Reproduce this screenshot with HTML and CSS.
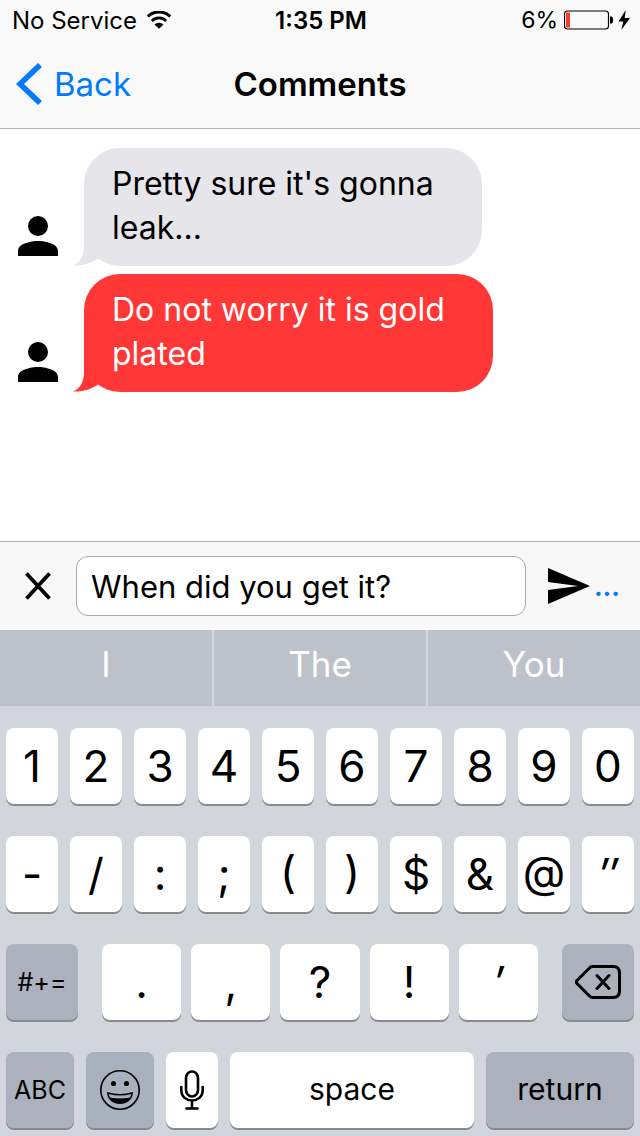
FILE: index.html
```html
<!DOCTYPE html>
<html lang="en">
<head>
<meta charset="utf-8">
<meta name="viewport" content="width=device-width">
<title>Comments</title>
<link rel="stylesheet" href="styles.css">
</head>
<body>
<div class="app">
  <div class="status">
    <div class="status-side">
      <span>No Service</span>
      <svg class="wifi" viewBox="0 0 24 18" aria-hidden="true">
        <path d="M0.800 5.500a16 16 0 0 1 22.400 0" fill="none" stroke="#000" stroke-width="3"/>
        <path d="M4.800 9.900a10.300 10.300 0 0 1 14.400 0" fill="none" stroke="#000" stroke-width="2.800"/>
        <path d="M12 17.800L7.500 13.500a6.500 6.500 0 0 1 9 0z"/>
      </svg>
    </div>
    <span class="clock">1:35 PM</span>
    <div class="status-side status-right">
      <span class="percent">6%</span>
      <svg class="battery" viewBox="0 0 50 20" aria-hidden="true">
        <rect x="0.500" y="1" width="44" height="18" rx="3" fill="none" stroke="#000" stroke-width="1.200"/>
        <rect x="2" y="2.500" width="4" height="15" fill="#ff3b30"/>
        <path d="M46 6.500h1.500q1.500 0 1.500 3.500t-1.500 3.500H46z"/>
      </svg>
      <svg class="bolt" viewBox="0 0 12 20" aria-hidden="true"><path d="M7.800 0L0.500 11.500h4.800L3.300 20 12 8H6.700z"/></svg>
    </div>
  </div>
  <header class="nav">
    <button class="back" type="button">
      <svg class="chevron" viewBox="0 0 26 42" aria-hidden="true"><path d="M24 2L4 21l20 19" fill="none" stroke="currentColor" stroke-width="5.600"/></svg>
      <span>Back</span>
    </button>
    <h1 class="title">Comments</h1>
  </header>
  <main class="thread">
    <article class="message">
      <svg class="avatar" viewBox="4 4 16 16" role="img" aria-label="User"><path d="M12 12a4 4 0 1 0 0-8 4 4 0 0 0 0 8zm0 2c-2.670 0-8 1-8 4v2h16v-2c0-3-5.330-4-8-4z"/></svg>
      <p class="bubble">Pretty sure it's gonna<br>leak...
        <svg class="tail" viewBox="0 0 40 40" aria-hidden="true"><path d="M12 2V20C12 30 8 37 1 39.500C11 40 19 37 25.500 33L40 10z"/></svg>
      </p>
    </article>
    <article class="message">
      <svg class="avatar" viewBox="4 4 16 16" role="img" aria-label="User"><path d="M12 12a4 4 0 1 0 0-8 4 4 0 0 0 0 8zm0 2c-2.670 0-8 1-8 4v2h16v-2c0-3-5.330-4-8-4z"/></svg>
      <p class="bubble bubble-red">Do not worry it is gold<br>plated
        <svg class="tail" viewBox="0 0 40 40" aria-hidden="true"><path d="M12 2V20C12 30 8 37 1 39.500C11 40 19 37 25.500 33L40 10z"/></svg>
      </p>
    </article>
  </main>
  <form class="composer">
    <button class="close" type="button" aria-label="Close">
      <svg class="cross" viewBox="0 0 26 28" aria-hidden="true"><path d="M1.500 1.500l23 25M24.500 1.500l-23 25" stroke="#000" stroke-width="3.800"/></svg>
    </button>
    <input class="field" type="text" aria-label="Comment" value="When did you get it?">
    <button class="send" type="button" aria-label="Send">
      <svg class="plane" viewBox="2 3 21 18" aria-hidden="true"><path d="M2 21L23 12 2 3v7l15 2-15 2z"/></svg>
      <span class="dots">...</span>
    </button>
  </form>
  <div class="suggestions">
    <button type="button">I</button>
    <button type="button">The</button>
    <button type="button">You</button>
  </div>
  <div class="keyboard">
    <div class="row">
      <button class="key" type="button">1</button><button class="key" type="button">2</button><button class="key" type="button">3</button><button class="key" type="button">4</button><button class="key" type="button">5</button><button class="key" type="button">6</button><button class="key" type="button">7</button><button class="key" type="button">8</button><button class="key" type="button">9</button><button class="key" type="button">0</button>
    </div>
    <div class="row">
      <button class="key" type="button">-</button><button class="key" type="button">/</button><button class="key" type="button">:</button><button class="key" type="button">;</button><button class="key key-raised" type="button">(</button><button class="key key-raised" type="button">)</button><button class="key" type="button">$</button><button class="key" type="button">&amp;</button><button class="key key-raised" type="button">@</button><button class="key key-slanted" type="button">″</button>
    </div>
    <div class="row row-punctuation">
      <button class="key key-dark key-small" type="button">#+=</button>
      <div class="group">
        <button class="key" type="button">.</button><button class="key" type="button">,</button><button class="key" type="button">?</button><button class="key" type="button">!</button><button class="key key-slanted" type="button">′</button>
      </div>
      <button class="key key-dark" type="button" aria-label="Delete">
        <svg class="delete" viewBox="0 0 46 34" aria-hidden="true"><path d="M17.500 1.500H38q6.500 0 6.500 6.500v18q0 6.500-6.500 6.500H17.500q-1.500 0-2.500-1L2 18.500q-1.500-1.500 0-3L15 2.500q1-1 2.500-1zM22 10.500L34 23.500M34 10.500L22 23.500" fill="none" stroke="#000" stroke-width="3" stroke-linecap="round"/></svg>
      </button>
    </div>
    <div class="row row-bottom">
      <button class="key key-dark key-small" type="button">ABC</button>
      <button class="key key-dark key-emoji" type="button" aria-label="Emoji">
        <svg class="emoji" viewBox="0 0 40 40" aria-hidden="true">
          <circle cx="20" cy="20" r="19.200" fill="none" stroke="#000" stroke-width="1.600"/>
          <circle cx="13.500" cy="13.500" r="2.600"/><circle cx="26.500" cy="13.500" r="2.600"/>
          <path d="M7 22q13 4 26 0c0 16-26 16-26 0z"/>
          <path d="M8.500 24q11.500 3 23 0l-1.500 3.500q-10 2-20 0z" fill="#a8b2bf"/>
        </svg>
      </button>
      <button class="key" type="button" aria-label="Dictation">
        <svg class="mic" viewBox="0 0 24 40" aria-hidden="true"><path d="M6 8a6 6.500 0 0 1 12 0v12a6 6.500 0 0 1-12 0zM1.300 17v3c0 14 21.400 14 21.400 0v-3M12 31v7M6.500 38.500h11" fill="none" stroke="#000" stroke-width="2.600" stroke-linecap="round"/></svg>
      </button>
      <button class="key key-word" type="button">space</button>
      <button class="key key-dark key-word" type="button">return</button>
    </div>
  </div>
</div>
</body>
</html>
```
FILE: styles.css
```css
* {
  box-sizing: border-box;
}

body {
  margin: 0;
  background: #fff;
  color: #000;
  font-family: Inter, "Liberation Sans", sans-serif;
}

button,
input {
  margin: 0;
  padding: 0;
  border: 0;
  background: none;
  color: inherit;
  font: inherit;
}

svg {
  display: block;
  flex: none;
}

.app {
  display: flex;
  flex-direction: column;
  min-height: 100vh;
}

/* Status bar */
.status {
  display: grid;
  grid-template-columns: 1fr auto 1fr;
  align-items: center;
  height: 40px;
  padding: 0 10px 0 12px;
  background: #f9f9f9;
  font-size: 24px;
}

.status-side {
  display: flex;
  align-items: center;
  gap: 10px;
}

.status-right {
  justify-content: flex-end;
  gap: 4px;
}

.percent {
  padding-right: 2px;
  font-size: 23px;
}

.clock {
  font-weight: 600;
}

.wifi {
  width: 24px;
  height: 18px;
}

.battery {
  width: 50px;
  height: 20px;
}

.bolt {
  width: 12px;
  height: 20px;
}

/* Navigation bar */
.nav {
  display: grid;
  grid-template-columns: 1fr auto 1fr;
  align-items: center;
  height: 89px;
  padding: 0 16px;
  border-bottom: 1px solid #b2b2b2;
  background: #f9f9f9;
}

.back {
  display: flex;
  align-items: center;
  justify-self: start;
  gap: 12px;
  color: #007aff;
  font-size: 33px;
}

.chevron {
  width: 26px;
  height: 42px;
}

.title {
  margin: 0;
  font-size: 33px;
  font-weight: 600;
}

/* Conversation */
.thread {
  display: flex;
  flex: 1;
  flex-direction: column;
  gap: 8px;
  padding: 19px 18px;
}

.message {
  display: flex;
  align-items: flex-end;
  gap: 26px;
}

.avatar {
  width: 40px;
  height: 40px;
  margin-bottom: 10px;
}

.bubble {
  position: relative;
  margin: 0;
  padding: 14px 48px 16px 28px;
  border-radius: 36px;
  background: #e5e5ea;
  color: #000;
  font-size: 32px;
  line-height: 44px;
}

.bubble-red {
  background: #ff3737;
  color: #fff;
}

.tail {
  position: absolute;
  bottom: 0;
  left: -12px;
  width: 40px;
  height: 40px;
  fill: #e5e5ea;
}

.bubble-red .tail {
  fill: #ff3737;
}

/* Composer */
.composer {
  display: flex;
  align-items: center;
  padding: 14px 20px 14px 0;
  border-top: 1px solid #b2b2b2;
  background: #f8f8f8;
}

.close {
  display: flex;
  justify-content: center;
  width: 76px;
}

.cross {
  width: 26px;
  height: 28px;
}

.field {
  flex: 1;
  min-width: 0;
  height: 60px;
  padding: 0 14px;
  border: 1px solid #aaa;
  border-radius: 12px;
  background: #fff;
  font-size: 31px;
}

.send {
  display: flex;
  align-items: center;
  gap: 4px;
  margin-left: 22px;
  color: #007aff;
  font-size: 26px;
  font-weight: 700;
}

.plane {
  width: 42px;
  height: 36px;
  fill: #000;
}

/* Word suggestions */
.suggestions {
  display: grid;
  grid-template-columns: repeat(3, 1fr);
  gap: 2px;
  height: 76px;
  background: #d2d5db;
}

.suggestions button {
  padding-bottom: 8px;
  background: #bbc2ca;
  color: #fff;
  font-size: 35px;
}

/* Keyboard */
.keyboard {
  display: grid;
  gap: 30px;
  padding: 22px 6px 6px;
  background: #d2d5db;
}

.row {
  display: grid;
  grid-template-columns: repeat(10, 1fr);
  gap: 12px;
}

.row-punctuation {
  grid-template-columns: 72fr 436fr 72fr;
  gap: 24px;
}

.row-bottom {
  grid-template-columns: 68fr 68fr 52fr 244fr 148fr;
}

.group {
  display: grid;
  grid-template-columns: repeat(5, 1fr);
  gap: 10px;
}

.key {
  display: flex;
  align-items: center;
  justify-content: center;
  min-width: 0;
  height: 76px;
  margin-bottom: 2px;
  border-radius: 8px;
  background: #fff;
  box-shadow: 0 2px 0 #898b8f;
  font-size: 44px;
}

.key-raised {
  padding-bottom: 4px;
}

.key-slanted {
  font-style: italic;
}

.key-dark {
  background: #abb1bd;
}

.key-emoji {
  background: #a8b2bf;
}

.key-small {
  font-size: 25px;
}

.key-word {
  padding-bottom: 2px;
  font-size: 30px;
}

.delete {
  width: 46px;
  height: 34px;
}

.emoji {
  width: 40px;
  height: 40px;
}

.mic {
  width: 24px;
  height: 40px;
}
```
